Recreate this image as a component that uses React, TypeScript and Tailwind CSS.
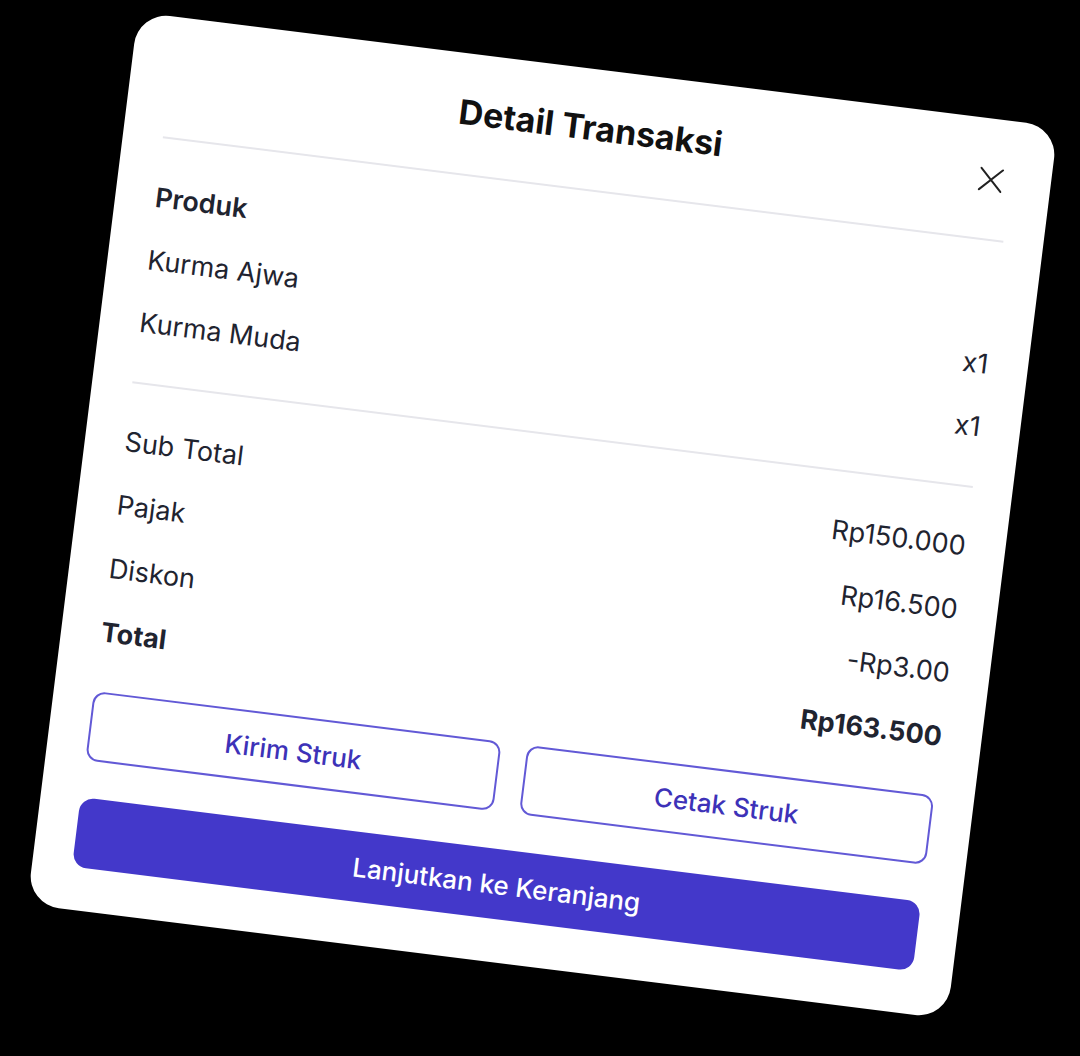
export default function App() {
  const items = [
    { name: 'Kurma Ajwa', qty: 'x1' },
    { name: 'Kurma Muda', qty: 'x1' },
  ];

  const summary = [
    { label: 'Sub Total', value: 'Rp150.000' },
    { label: 'Pajak', value: 'Rp16.500' },
    { label: 'Diskon', value: '-Rp3.00' },
  ];

  return (
    <div
      className="w-full h-[1056px] bg-black flex items-center justify-center overflow-hidden"
      style={{ fontFamily: 'Inter, "Noto Sans", sans-serif' }}
    >
      <div className="relative w-[927px] bg-white rounded-[32px] px-10 pt-[39px] pb-[43px] rotate-[7.1deg] translate-x-[2px] -translate-y-[13px]">
        {/* Header */}
        <h1 className="text-[34px] leading-[40px] font-bold text-[#111111] text-center">
          Detail Transaksi
        </h1>
        <button className="absolute left-[855px] top-[49px] w-6 h-6 flex items-center justify-center text-[#222]">
          <svg width="24" height="24" viewBox="0 0 24 24" fill="none">
            <path d="M1 1L23 23M23 1L1 23" stroke="currentColor" strokeWidth="2" strokeLinecap="round" />
          </svg>
        </button>

        <div className="mt-[41px] h-[2px] bg-[#e6e6eb]" />

        {/* Products */}
        <div className="mt-[42px] flex flex-col gap-[27px] text-[27px] leading-[36px] text-[#1f2430]">
          <div className="font-semibold">Produk</div>
          {items.map(it => (
            <div key={it.name} className="flex justify-between">
              <span>{it.name}</span>
              <span>{it.qty}</span>
            </div>
          ))}
        </div>

        <div className="mt-[41px] h-[2px] bg-[#e6e6eb]" />

        {/* Summary */}
        <div className="mt-[41px] flex flex-col gap-[28px] text-[27px] leading-[36px] text-[#1f2430]">
          {summary.map(s => (
            <div key={s.label} className="flex justify-between">
              <span>{s.label}</span>
              <span>{s.value}</span>
            </div>
          ))}
          <div className="flex justify-between font-bold">
            <span>Total</span>
            <span>Rp163.500</span>
          </div>
        </div>

        {/* Actions */}
        <div className="mt-[41px] grid grid-cols-2 gap-[26px]">
          <button className="h-[70px] rounded-[12px] border-2 border-[#6259d6] text-[#3d32b8] text-[26px] font-medium">
            Kirim Struk
          </button>
          <button className="h-[70px] rounded-[12px] border-2 border-[#6259d6] text-[#3d32b8] text-[26px] font-medium">
            Cetak Struk
          </button>
        </div>
        <button className="mt-[37px] w-full h-[70px] rounded-[14px] bg-[#4338ca] text-white text-[26px] font-medium">
          Lanjutkan ke Keranjang
        </button>
      </div>
    </div>
  );
}
